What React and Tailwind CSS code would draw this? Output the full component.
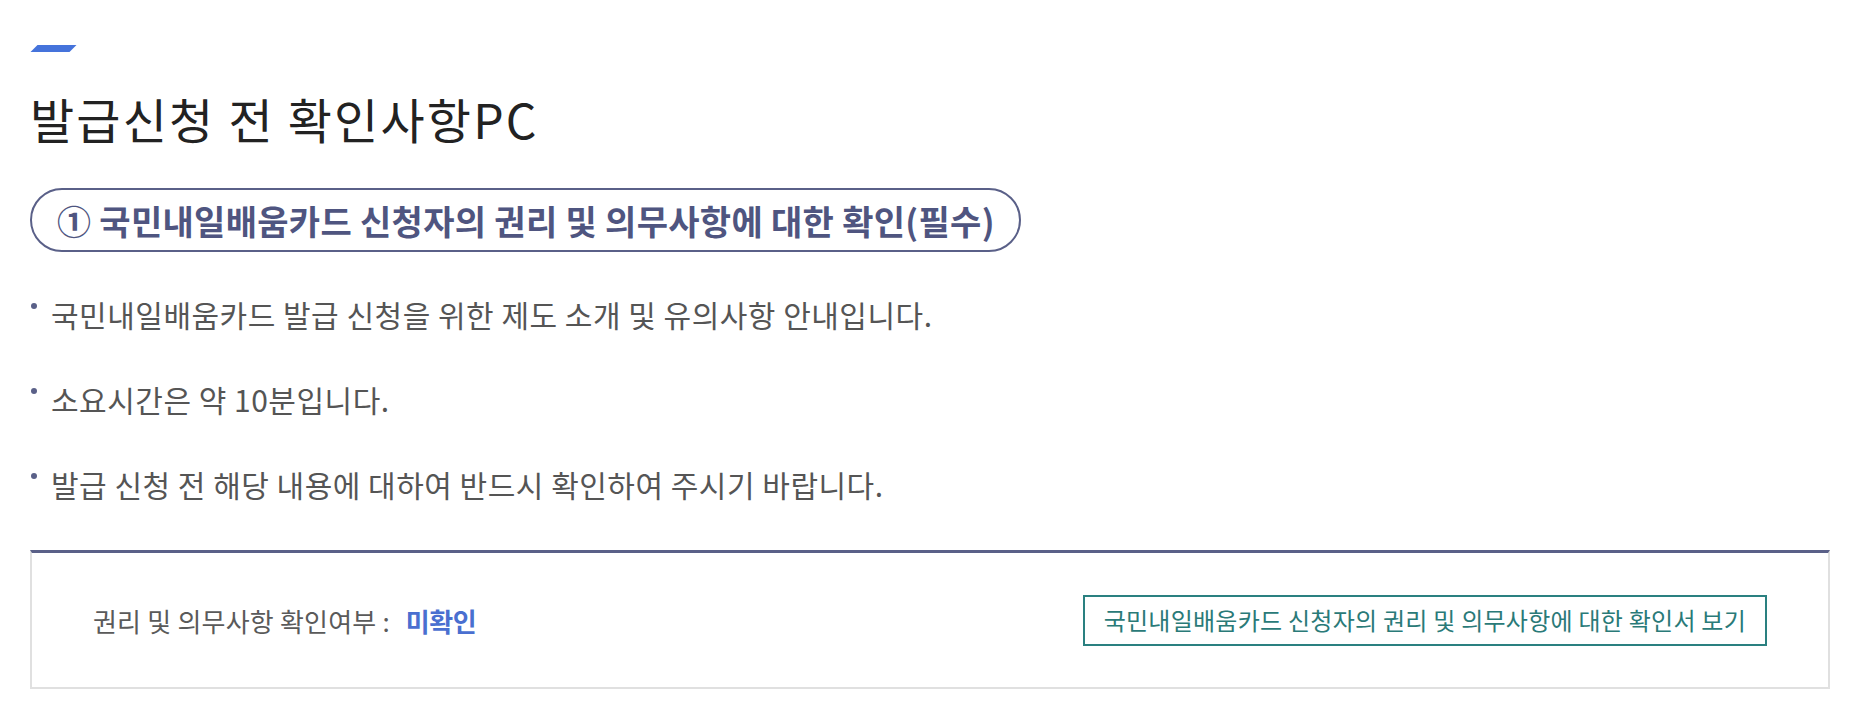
export default function App() {
  const notes = [
    '국민내일배움카드 발급 신청을 위한 제도 소개 및 유의사항 안내입니다.',
    '소요시간은 약 10분입니다.',
    '발급 신청 전 해당 내용에 대하여 반드시 확인하여 주시기 바랍니다.',
  ];

  return (
    <div
      className="min-h-screen bg-white pt-[45px] pl-[30px] pr-[46px]"
      style={{ fontFamily: '"Noto Sans CJK KR", "Noto Sans", sans-serif' }}
    >
      {/* accent bar */}
      <div className="ml-[4px] h-[7px] w-[39px] -skew-x-[45deg] bg-[#4573db]" />

      {/* title */}
      <h1 className="mt-[38px] text-[48px] leading-[56px] font-normal tracking-[2.2px] text-[#222]">
        발급신청 전 확인사항PC
      </h1>

      {/* section pill */}
      <div className="mt-[42px] inline-flex h-[64px] items-center rounded-full border-2 border-[#5a6088] pl-[25px] pr-[24px]">
        <span className="text-[34px] font-bold tracking-[0.3px] text-[#4f5580]">
          ① 국민내일배움카드 신청자의 권리 및 의무사항에 대한 확인(필수)
        </span>
      </div>

      {/* notes */}
      <ul className="mt-[20px]">
        {notes.map((n) => (
          <li key={n} className="flex items-center text-[30px] leading-[85px] tracking-[0.5px] text-[#555]">
            <span className="mr-[14px] ml-[1px] h-[6px] w-[6px] -translate-y-[9px] rounded-full bg-[#5a6088]" />
            {n}
          </li>
        ))}
      </ul>

      {/* confirm box */}
      <div className="mt-[23px] flex h-[139px] items-center justify-between border-x-2 border-b-2 border-t-[3px] border-x-[#e0e0e0] border-b-[#e0e0e0] border-t-[#5a6088] px-[61px]">
        <div className="flex items-center text-[26px] tracking-[0.2px] text-[#5a5a5a]">
          <span>권리 및 의무사항 확인여부 :</span>
          <span className="ml-[16px] font-bold tracking-[-0.5px] text-[#4a6fd0]">미확인</span>
        </div>
        <button className="flex h-[51px] items-center border-2 border-[#2a8080] px-[19px] text-[24px] tracking-[0.25px] text-[#2a7a78]">
          국민내일배움카드 신청자의 권리 및 의무사항에 대한 확인서 보기
        </button>
      </div>
    </div>
  );
}
